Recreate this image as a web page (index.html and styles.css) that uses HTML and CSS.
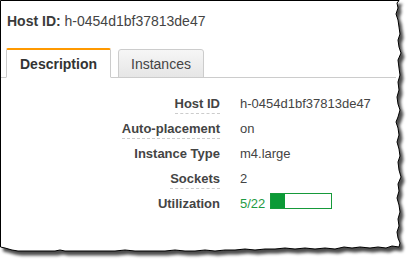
FILE: index.html
```html
<!DOCTYPE html>
<html lang="en">
<head>
<meta charset="UTF-8">
<meta name="viewport" content="width=device-width, initial-scale=1.0">
<title>Host details</title>
<link rel="stylesheet" href="styles.css">
</head>
<body>
<div class="sheet">
  <!-- torn paper edge -->
  <svg class="edge" width="413" height="263" viewBox="0 0 413 263">
    <defs>
      <filter id="shadow" x="-5%" y="-5%" width="115%" height="115%">
        <feDropShadow dx="3" dy="4" stdDeviation="1.6" flood-color="#000" flood-opacity="0.7"/>
      </filter>
    </defs>
    <path filter="url(#shadow)" fill="#fff" stroke="#000" stroke-width="1"
      d="M0.5,0.5 L399,0.5 L397,3 L398,8 L396,14 L398,20 L399,27 L400,34 L398,40 L399,47 L401,53 L398,60 L399,68 L400,75 L398,82 L399,90 L397,97 L398,104 L400,110 L398,117 L396,122 L398,128 L399,135 L397,142 L399,149 L400,156 L398,162 L399,170 L401,177 L398,184 L399,191 L397,198 L399,205 L400,212 L398,219 L399,226 L397,232 L398,238 L400,243 L399,247 L392,246 L386,248 L378,247 L370,248 L360,247 L352,248 L344,247 L335,249 L325,248 L315,249 L305,248 L295,249 L285,248 L275,249 L265,249 L255,250 L245,249 L235,250 L225,250 L215,251 L205,250 L195,251 L185,251 L175,250 L165,251 L155,251 L145,251 L135,251 L125,250 L115,251 L105,251 L95,251 L85,251 L75,251 L65,251 L60,250 L55,251 L45,251 L35,251 L18,251 L12,250 L5,248 L0.5,247 Z"/>
  </svg>

  <div class="content">
    <div class="header"><b>Host ID:</b> h-0454d1bf37813de47</div>

    <div class="tabs">
      <div class="tab active">Description</div>
      <div class="tab">Instances</div>
    </div>

    <div class="details">
      <div class="label"><span class="hint">Host ID</span></div>
      <div class="value">h-0454d1bf37813de47</div>

      <div class="label"><span class="hint">Auto-placement</span></div>
      <div class="value">on</div>

      <div class="label">Instance Type</div>
      <div class="value">m4.large</div>

      <div class="label"><span class="hint">Sockets</span></div>
      <div class="value">2</div>

      <div class="label">Utilization</div>
      <div class="value"><span class="used">5/22</span> <span class="meter"><span class="fill" style="width: 22.7%"></span></span></div>
    </div>
  </div>
</div>
</body>
</html>
```

FILE: styles.css
```css
body {
  margin: 0;
  background-color: #fff;
  font-family: "Liberation Sans", Arial, sans-serif;
  color: #444;
}

.sheet {
  position: relative;
  width: 413px;
  height: 263px;
}

.edge {
  position: absolute;
  top: 0;
  left: 0;
}

.content {
  position: relative;
  width: 396px;
}

.header {
  padding: 13px 0 0 7px;
  font-size: 14px;
  line-height: 16px;
  color: #444;
}

.header b {
  color: #3a3a3a;
}

.tabs {
  display: flex;
  align-items: flex-end;
  gap: 7px;
  margin-top: 19px;
  padding-left: 5px;
  margin-left: 1px;
  border-bottom: 1px solid #ccc;
}

.tab {
  margin-bottom: -1px;
  padding: 6px 12px 5px;
  font-size: 14px;
  line-height: 16px;
  color: #444;
  border: 1px solid #ccc;
  border-radius: 3px 3px 0 0;
  background: linear-gradient(#f6f6f6, #e6e6e6);
}

.tab.active {
  padding: 6px 13px 5px;
  border-top: 2px solid #f90;
  border-bottom-color: #fff;
  border-radius: 2px 2px 0 0;
  background: #fff;
  font-weight: bold;
  color: #333;
}

.details {
  display: grid;
  grid-template-columns: 220px 1fr;
  column-gap: 20px;
  padding-top: 13px;
  font-size: 13px;
  line-height: 25px;
}

.label {
  text-align: right;
  font-weight: bold;
  color: #444;
}

.hint {
  padding-bottom: 2px;
  border-bottom: 1px dashed #ccc;
}

.value {
  color: #444;
}

.used {
  color: #1f9a43;
}

.meter {
  display: inline-block;
  width: 60px;
  height: 14px;
  margin-left: 1px;
  border: 1px solid #169a3a;
  vertical-align: -1px;
}

.fill {
  display: block;
  height: 100%;
  background-color: #0b9a36;
}
```
